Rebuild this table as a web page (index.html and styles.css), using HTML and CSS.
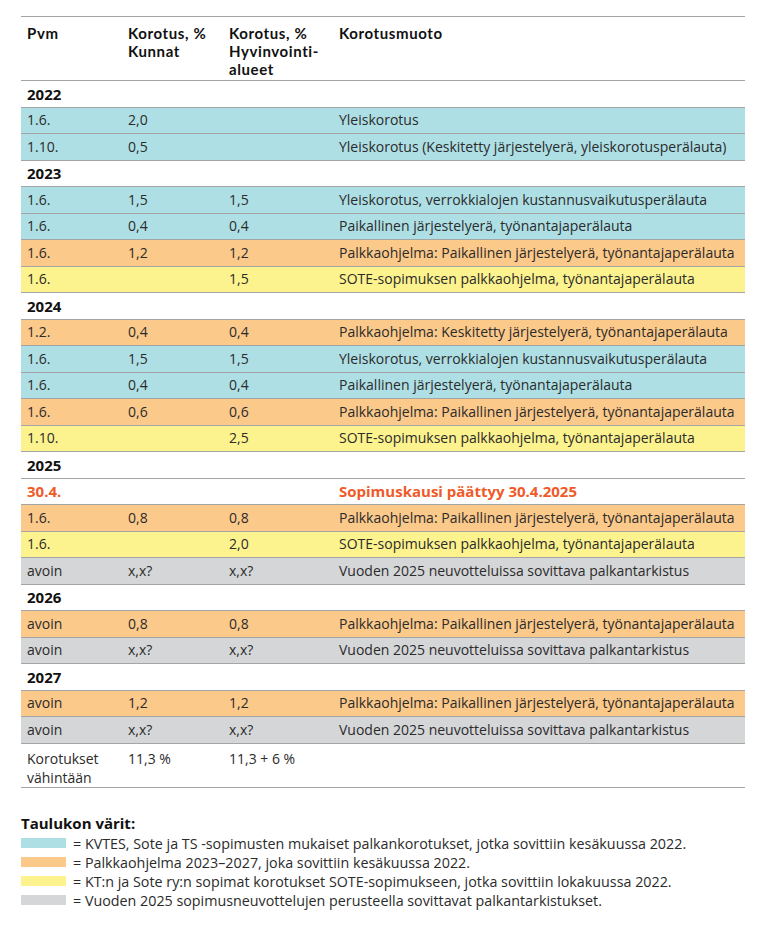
FILE: index.html
```html
<!DOCTYPE html>
<html lang="fi">
<head>
<meta charset="utf-8">
<link rel="stylesheet" href="styles.css">
</head>
<body>
<table class="raises">
  <colgroup>
    <col class="c-date"><col class="c-mun"><col class="c-hv"><col class="c-type">
  </colgroup>
  <thead>
    <tr><th>Pvm</th><th>Korotus, %<br>Kunnat</th><th>Korotus, %<br>Hyvinvointi-<br>alueet</th><th>Korotusmuoto</th></tr>
  </thead>
  <tbody>
    <tr class="year"><td colspan="4">2022</td></tr>
    <tr class="blue"><td>1.6.</td><td>2,0</td><td></td><td>Yleiskorotus</td></tr>
    <tr class="blue"><td>1.10.</td><td>0,5</td><td></td><td>Yleiskorotus (Keskitetty järjestelyerä, yleiskorotusperälauta)</td></tr>
    <tr class="year"><td colspan="4">2023</td></tr>
    <tr class="blue"><td>1.6.</td><td>1,5</td><td>1,5</td><td>Yleiskorotus, verrokkialojen kustannusvaikutusperälauta</td></tr>
    <tr class="blue"><td>1.6.</td><td>0,4</td><td>0,4</td><td>Paikallinen järjestelyerä, työnantajaperälauta</td></tr>
    <tr class="orange"><td>1.6.</td><td>1,2</td><td>1,2</td><td>Palkkaohjelma: Paikallinen järjestelyerä, työnantajaperälauta</td></tr>
    <tr class="yellow"><td>1.6.</td><td></td><td>1,5</td><td>SOTE-sopimuksen palkkaohjelma, työnantajaperälauta</td></tr>
    <tr class="year"><td colspan="4">2024</td></tr>
    <tr class="orange"><td>1.2.</td><td>0,4</td><td>0,4</td><td>Palkkaohjelma: Keskitetty järjestelyerä, työnantajaperälauta</td></tr>
    <tr class="blue"><td>1.6.</td><td>1,5</td><td>1,5</td><td>Yleiskorotus, verrokkialojen kustannusvaikutusperälauta</td></tr>
    <tr class="blue"><td>1.6.</td><td>0,4</td><td>0,4</td><td>Paikallinen järjestelyerä, työnantajaperälauta</td></tr>
    <tr class="orange"><td>1.6.</td><td>0,6</td><td>0,6</td><td>Palkkaohjelma: Paikallinen järjestelyerä, työnantajaperälauta</td></tr>
    <tr class="yellow"><td>1.10.</td><td></td><td>2,5</td><td>SOTE-sopimuksen palkkaohjelma, työnantajaperälauta</td></tr>
    <tr class="year"><td colspan="4">2025</td></tr>
    <tr class="end"><td>30.4.</td><td></td><td></td><td>Sopimuskausi päättyy 30.4.2025</td></tr>
    <tr class="orange"><td>1.6.</td><td>0,8</td><td>0,8</td><td>Palkkaohjelma: Paikallinen järjestelyerä, työnantajaperälauta</td></tr>
    <tr class="yellow"><td>1.6.</td><td></td><td>2,0</td><td>SOTE-sopimuksen palkkaohjelma, työnantajaperälauta</td></tr>
    <tr class="grey"><td>avoin</td><td>x,x?</td><td>x,x?</td><td>Vuoden 2025 neuvotteluissa sovittava palkantarkistus</td></tr>
    <tr class="year"><td colspan="4">2026</td></tr>
    <tr class="orange"><td>avoin</td><td>0,8</td><td>0,8</td><td>Palkkaohjelma: Paikallinen järjestelyerä, työnantajaperälauta</td></tr>
    <tr class="grey"><td>avoin</td><td>x,x?</td><td>x,x?</td><td>Vuoden 2025 neuvotteluissa sovittava palkantarkistus</td></tr>
    <tr class="year"><td colspan="4">2027</td></tr>
    <tr class="orange"><td>avoin</td><td>1,2</td><td>1,2</td><td>Palkkaohjelma: Paikallinen järjestelyerä, työnantajaperälauta</td></tr>
    <tr class="grey"><td>avoin</td><td>x,x?</td><td>x,x?</td><td>Vuoden 2025 neuvotteluissa sovittava palkantarkistus</td></tr>
    <tr class="total"><td>Korotukset<br>vähintään</td><td>11,3 %</td><td>11,3 + 6 %</td><td></td></tr>
  </tbody>
</table>

<section class="legend">
  <h2 class="legend-title">Taulukon värit:</h2>
  <ul class="legend-list">
    <li><span class="swatch blue"></span>= KVTES, Sote ja TS -sopimusten mukaiset palkankorotukset, jotka sovittiin kesäkuussa 2022.</li>
    <li><span class="swatch orange"></span>= Palkkaohjelma 2023–2027, joka sovittiin kesäkuussa 2022.</li>
    <li><span class="swatch yellow"></span>= KT:n ja Sote ry:n sopimat korotukset SOTE-sopimukseen, jotka sovittiin lokakuussa 2022.</li>
    <li><span class="swatch grey"></span>= Vuoden 2025 sopimusneuvottelujen perusteella sovittavat palkantarkistukset.</li>
  </ul>
</section>
</body>
</html>
```

FILE: styles.css
```css
* { box-sizing: border-box; }
html, body { margin: 0; padding: 0; background: #fff; }
body {
  font-family: "Open Sans", "Liberation Sans", sans-serif;
  color: #2b2b2b;
  padding: 16px 15px 0 21px;
}
.raises {
  width: 724px;
  border-collapse: collapse;
  table-layout: fixed;
  font-size: 14px;
}
.c-date { width: 101px; }
.c-mun { width: 101px; }
.c-hv { width: 110px; }
.c-type { width: 412px; }
.raises th, .raises td {
  border-top: 1px solid #a5a5a5;
  border-bottom: 1px solid #a5a5a5;
  padding: 0 6px;
  text-align: left;
  white-space: nowrap;
}
.raises td { height: 26.5px; vertical-align: middle; line-height: 18px; }
.raises th {
  height: 64px;
  vertical-align: top;
  padding-top: 7px;
  font-family: Lato, "Open Sans", sans-serif;
  font-size: 15px;
  letter-spacing: 0.6px;
  line-height: 18px;
  font-weight: 700;
  color: #111;
}
.raises tr.year td { font-weight: 700; color: #111; font-size: 15px; }
.raises tr.end td { font-weight: 700; color: #f05a28; font-size: 15px; }
.raises tr.blue td { background: #aedfe5; }
.raises tr.orange td { background: #fbc98a; }
.raises tr.yellow td { background: #fcf38e; }
.raises tr.grey td { background: #d5d6d8; }
.raises tr.total td {
  height: 43px;
  vertical-align: top;
  padding-top: 5px;
  line-height: 19px;
}
.legend { margin-top: 26px; }
.legend-title {
  margin: 0;
  font-size: 15px;
  line-height: 18px;
  font-weight: 700;
  color: #111;
}
.legend-list {
  list-style: none;
  margin: 2px 0 0;
  padding: 0;
  font-size: 14.3px;
  line-height: 19px;
}
.legend-list li { display: flex; align-items: center; gap: 7px; }
.swatch { display: inline-block; width: 45px; height: 10px; flex: none; }
.swatch.blue { background: #aedfe5; }
.swatch.orange { background: #fbc98a; }
.swatch.yellow { background: #fcf38e; }
.swatch.grey { background: #d5d6d8; }
```
